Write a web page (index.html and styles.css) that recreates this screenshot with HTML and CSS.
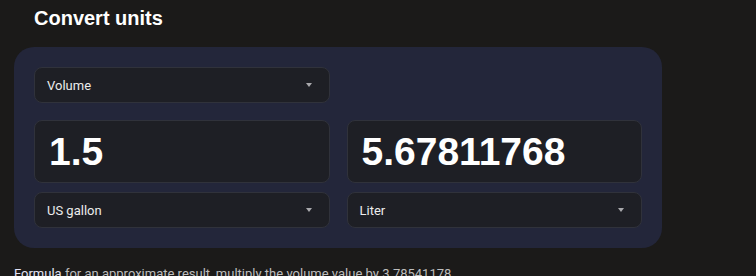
FILE: index.html
```html
<!DOCTYPE html>
<html lang="en">
<head>
  <meta charset="UTF-8">
  <title>Convert units</title>
  <meta name="viewport" content="width=device-width, initial-scale=1.0" />
  <link rel="stylesheet" href="styles.css">
</head>
<body>
  <div class="converter">
    <h1>Convert units</h1>

    <div class="card">
      <div class="field select kind">
        <span>Volume</span>
        <span class="caret"></span>
      </div>

      <div class="field amount">1.5</div>
      <div class="field amount">5.67811768</div>

      <div class="field select">
        <span>US gallon</span>
        <span class="caret"></span>
      </div>
      <div class="field select">
        <span>Liter</span>
        <span class="caret"></span>
      </div>
    </div>

    <p class="formula"><a href="#">Formula</a> for an approximate result, multiply the volume value by 3.78541178</p>
  </div>
</body>
</html>
```

FILE: styles.css
```css
* {
  box-sizing: border-box;
}

body {
  margin: 0;
  background: #1b1a19;
  font-family: Roboto, 'Liberation Sans', sans-serif;
  color: #e6e6e6;
}

.converter {
  padding: 0 14px;
}

h1 {
  margin: 0;
  padding: 6px 20px 0;
  font-family: 'Liberation Sans', Arial, sans-serif;
  font-size: 20px;
  line-height: 24px;
  font-weight: bold;
  color: #fff;
}

.card {
  width: 648px;
  margin-top: 17px;
  padding: 20px;
  background: #23263a;
  border-radius: 20px;
  display: grid;
  grid-template-columns: 1fr 1fr;
  column-gap: 17px;
  row-gap: 9px;
}

.field {
  background: #1e1f25;
  border: 1px solid #30323b;
  border-radius: 8px;
}

.kind {
  grid-column: 1;
  margin-bottom: 8px;
}

.kind + .amount {
  grid-column: 1;
}

.select {
  height: 36px;
  padding: 0 14px 0 12px;
  display: flex;
  align-items: center;
  justify-content: space-between;
  font-size: 13px;
  color: #ececec;
}

.caret {
  width: 0;
  height: 0;
  border-left: 3px solid transparent;
  border-right: 3px solid transparent;
  border-top: 4px solid #a9a9ad;
  margin-right: 3px;
}

.amount {
  height: 63px;
  padding: 0 14px;
  display: flex;
  align-items: center;
  font-family: 'Liberation Sans', Arial, sans-serif;
  font-size: 39px;
  font-weight: bold;
  color: #fff;
}

.formula {
  margin: 17px 0 0;
  font-size: 13px;
  line-height: 18px;
  color: #bdbdbd;
}

.formula a {
  color: #e2e2f4;
  text-decoration: none;
}
```
